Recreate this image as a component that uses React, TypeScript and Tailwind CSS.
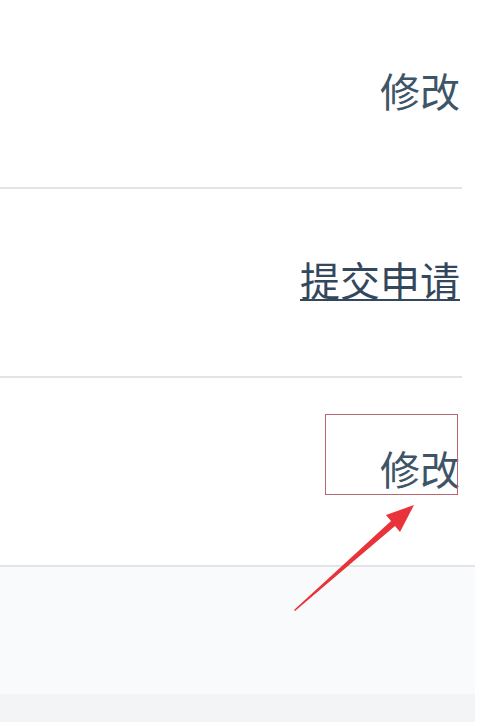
import React from 'react';

const font = { fontFamily: '"Noto Sans CJK SC", "Noto Sans", sans-serif' };

function Row({ children, wide }: { children: React.ReactNode; wide?: boolean }) {
    return (
        <div
            className={`flex h-[189px] items-center justify-end border-b-2 border-[#e2e4e6] pb-[8px] ${wide ? 'w-[475px] pr-[15px]' : 'w-[462px] pr-[2px]'}`}
        >
            {children}
        </div>
    );
}

export default function App() {
    return (
        <div className="relative h-[726px] w-[500px] overflow-hidden bg-white" style={font}>
            <Row>
                <span className="text-[40px] leading-none text-[#3e5467]">修改</span>
            </Row>
            <Row>
                <span className="text-[40px] leading-none text-[#33485c] underline decoration-2 underline-offset-[3px]">提交申请</span>
            </Row>
            <Row wide>
                <span className="text-[40px] leading-none text-[#3e5467]">修改</span>
            </Row>

            {/* footer strip */}
            <div className="h-[127px] w-[475px] bg-[#f9fafc]" />
            <div className="h-[28px] w-[475px] bg-[#f3f4f5]" />

            {/* annotation */}
            <div className="absolute left-[325px] top-[414px] h-[81px] w-[133px] border border-[#b8666f]" />
            <svg className="absolute left-0 top-0" width="500" height="726" viewBox="0 0 500 726">
                <polygon points="294,610 391,521 386,515 414,505 400,532 395,526 295,611" fill="#e8333a" />
            </svg>
        </div>
    );
}
